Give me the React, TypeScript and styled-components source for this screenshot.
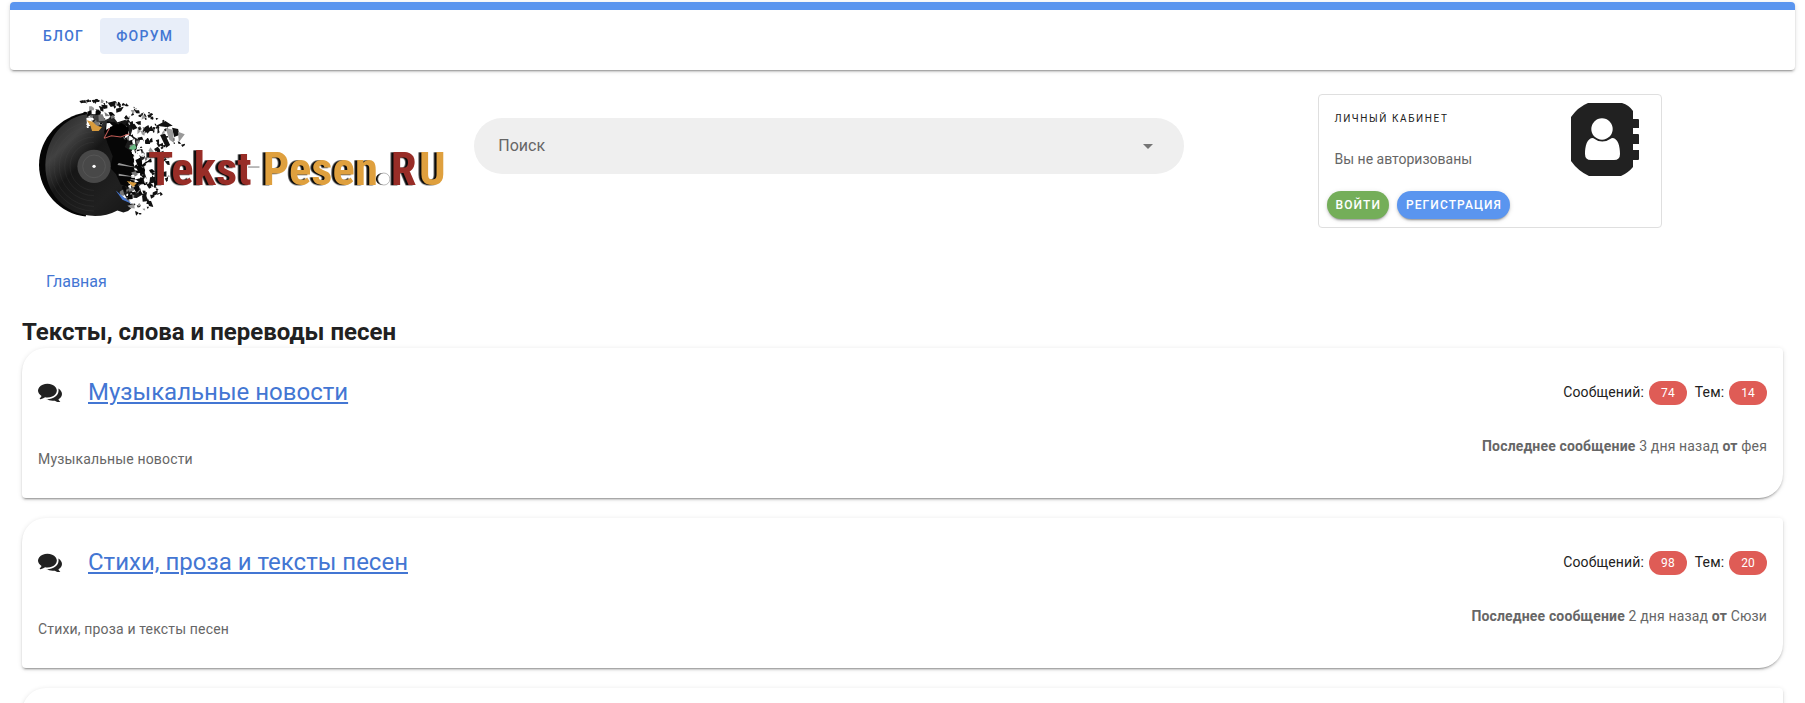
import React from "react";
import styled, { createGlobalStyle } from "styled-components";

const GlobalStyle = createGlobalStyle`
  html { scrollbar-width: none; }
  *, *::before, *::after { box-sizing: border-box; }
  body {
    margin: 0;
    background: #fff;
    color: #212121;
    font-family: Roboto, "Liberation Sans", sans-serif;
    font-size: 16px;
    line-height: 24px;
  }
`;

const raised = `0 3px 1px -2px rgba(0,0,0,.2), 0 2px 2px 0 rgba(0,0,0,.14), 0 1px 5px 0 rgba(0,0,0,.12)`;

const Page = styled.div`
  padding: 2px 10px 0;
`;

const TopBar = styled.header`
  height: 68px;
  padding: 8px 17px 0;
  border-top: 8px solid #5a95ef;
  border-radius: 4px;
  background: #fff;
  box-shadow: ${raised};
`;

const Nav = styled.nav`
  display: flex;
`;

const NavLink = styled.a<{ $active?: boolean }>`
  height: 36px;
  padding: 0 16px;
  border-radius: 4px;
  background: ${(p) => (p.$active ? "#e8eef9" : "transparent")};
  color: #4376d3;
  font-size: 14px;
  font-weight: 500;
  line-height: 36px;
  letter-spacing: 0.09em;
  text-transform: uppercase;
  text-decoration: none;
`;

const Container = styled.main`
  padding: 12px;
`;

const Intro = styled.div`
  display: grid;
  grid-template-columns: 3fr 5fr 4fr;
`;

const Column = styled.div`
  min-width: 0;
  padding: 12px;
`;

const LogoLink = styled.a`
  display: block;
  svg { display: block; width: 100%; height: auto; }
`;

const LogoText = styled.g`
  font-family: "Liberation Sans Narrow", "Roboto Condensed", "Liberation Serif", serif;
  font-size: 140px;
  font-weight: 700;
  filter: drop-shadow(-8px 1px 0 #0a0a0a);
`;

const SearchBox = styled.label`
  display: flex;
  align-items: center;
  height: 56px;
  margin-top: 24px;
  padding: 0 24px;
  border-radius: 28px;
  background: #efefef;
  color: #757575;
`;

const SearchInput = styled.input`
  flex: 1;
  min-width: 0;
  padding: 0;
  border: 0;
  outline: 0;
  background: transparent;
  color: #212121;
  font: inherit;
  &::placeholder { color: #666; opacity: 1; }
`;

const Account = styled.section`
  display: flex;
  flex-direction: column;
  justify-content: space-between;
  max-width: 344px;
  height: 134px;
  margin: 0 auto;
  padding: 8px;
  border: 1px solid #dfdfdf;
  border-radius: 4px;
`;

const AccountInfo = styled.div`
  display: flex;
  justify-content: space-between;
  padding: 0 14px 0 8px;
`;

const Overline = styled.h2`
  margin: 0 0 14px;
  font-size: 10px;
  font-weight: 400;
  line-height: 32px;
  letter-spacing: 0.16em;
  text-transform: uppercase;
`;

const Muted = styled.p`
  margin: 0;
  color: #666;
  font-size: 14px;
  line-height: 20px;
`;

const Actions = styled.div`
  display: flex;
  gap: 8px;
`;

const Pill = styled.button<{ $color: string }>`
  height: 28px;
  padding: 0 8px 0 9px;
  border: 0;
  border-radius: 14px;
  background: ${(p) => p.$color};
  box-shadow: ${raised};
  color: #fff;
  font-family: inherit;
  font-size: 12px;
  font-weight: 500;
  letter-spacing: 0.09em;
  text-transform: uppercase;
`;

const Breadcrumbs = styled.nav`
  padding: 30px 24px 14px;
  a { color: #4376d3; text-decoration: none; }
`;

const SectionTitle = styled.h1`
  margin: 8px 0 0;
  font-size: 24px;
  font-weight: 700;
  line-height: 32px;
`;

const ForumList = styled.div`
  display: grid;
  gap: 20px;
`;

const ForumCard = styled.article`
  display: flex;
  flex-direction: column;
  gap: 28px;
  min-height: 150px;
  padding: 28px 16px 16px;
  border-radius: 24px 4px;
  background: #fff;
  box-shadow: ${raised};
`;

const CardRow = styled.div`
  display: flex;
  align-items: center;
  justify-content: space-between;
`;

const CardFooter = styled(CardRow)`
  align-items: flex-start;
  letter-spacing: 0.01em;
`;

const Heading = styled.div`
  display: flex;
  align-items: center;
  gap: 26px;
`;

const ForumLink = styled.a`
  color: #4376d3;
  font-size: 24px;
  line-height: 32px;
`;

const Stats = styled.div`
  display: flex;
  align-items: baseline;
  font-size: 14px;
  letter-spacing: 0.01em;
`;

const Badge = styled.span`
  margin: 0 8px 0 5px;
  padding: 0 12px;
  border-radius: 12px;
  background: #df5c56;
  color: #fff;
  font-size: 12px;
  line-height: 24px;
  &:last-child { margin-right: 0; }
`;

const Description = styled(Muted)`
  padding-top: 13px;
`;

/* Pieces flying off the right side of the record. */
function makeShards() {
  let seed = 11;
  const rnd = () => {
    seed = (seed * 16807) % 2147483647;
    return seed / 2147483647;
  };
  const shards: { d: string; fill: string }[] = [];
  for (let i = 0; i < 330; i++) {
    const angle = -1.75 + rnd() * 2.65;
    const spread = Math.pow(rnd(), 1.5);
    const r = 112 + spread * (angle < -0.3 ? 150 : 100);
    const x = 225 + Math.cos(angle) * r * 1.08;
    const y = 238 + Math.sin(angle) * Math.min(r, 190);
    const s = (r < 200 ? 8 : 5) * (0.5 + rnd());
    const p = [0, 1, 2, 3].map((k) => {
      const a = k * 1.57 + rnd();
      const q = s * (0.4 + rnd());
      return `${Math.round(x + Math.cos(a) * q)} ${Math.round(y + Math.sin(a) * q)}`;
    });
    const c = rnd();
    shards.push({
      d: `M${p.join("L")}Z`,
      fill: r < 158 ? (c < 0.42 ? "#fff" : c < 0.6 ? "#777" : "#080808") : c < 0.2 ? "#999" : "#111",
    });
  }
  return shards;
}
const shards = makeShards();

const words = [
  { x: 384, text: "Tekst", fill: "#982d27" },
  { x: 728, text: "Pesen", fill: "#dfa03e" },
  { x: 1112, text: "R", fill: "#982d27" },
  { x: 1196, text: "U", fill: "#dfa03e" },
];

const Logo = () => (
  <svg viewBox="42 27 1248 384" role="img" aria-label="Tekst-Pesen.RU">
    <defs>
      <linearGradient id="vinyl" x1="0" y1="0" x2="1" y2="1">
        <stop offset="0" stopColor="#1d1d1d" />
        <stop offset=".25" stopColor="#414141" />
        <stop offset=".42" stopColor="#161616" />
        <stop offset=".7" stopColor="#202020" />
        <stop offset="1" stopColor="#111" />
      </linearGradient>
    </defs>
    <path d="M200 82C120 94 57 160 57 240s65 148 140 154l35-150Z" fill="#050505" />
    <path d="M205 87l35 0 10 13 30 -4 12 16 32 -10 16 22 -8 26 24 14 -6 30 25 20 -8 30 14 40 -22 18 6 28 -24 14 5 14 -22 20 -14 4 -18 -6Q260 393 225 393C130 390 75 320 76 240 78 160 130 95 205 87Z" fill="url(#vinyl)" />
    <path d="M262 108l50 14 16 34 -14 30 40 26 22 40 -10 42 -30 14 -34 -10 -14 -30 -18 -20 8 -34 -16 -40 -10 -34Z" fill="#060606" />
    {[72, 88, 104, 120, 134].map((r) => (
      <path key={r} d={`M${222 - r} 244a${r} ${r} 0 0 1 ${r} -${r}M${222 - r} 244a${r} ${r} 0 0 0 ${r} ${r}`} fill="none" stroke="#4b4b4b" strokeOpacity=".35" strokeWidth="2" />
    ))}
    <circle cx="222" cy="244" r="50" fill="#484848" />
    <circle cx="222" cy="244" r="34" fill="none" stroke="#5c5c5c" strokeWidth="2" />
    <circle cx="222" cy="244" r="5" fill="#fff" />
    {shards.map((s, i) => (
      <path key={i} d={s.d} fill={s.fill} />
    ))}
    <path d="M408 122l28-14 22 14-20 4ZM456 128l18 4 4 18-16 6ZM420 150l14-4 16 34-12 8Z" fill="#111" />
    <path d="M436 128l22 6 4 40-14-10ZM474 140l20 8-18 24Z" fill="#999" />
    <path d="M270 126l34-12 22 14-2 20-54 6Z" fill="#000" />
    <path d="M200 106l18 4 12 12 16 4-10 12-20 0-4-14Z" fill="#d79a3d" />
    <path d="M252 160l16-30M252 160l22-8 28 4 26-10" fill="none" stroke="#c15b55" strokeWidth="3" />
    <path d="M326 190l18-14 6 14-12 6Z" fill="#69b982" />
    <path d="M320 288l30 6-10 12Z" fill="#d79a3d" />
    <path d="M287 316l48 40-28-12Z" fill="#4676cf" />
    <path d="M292 240l60 8-56-14ZM296 266l50 10-50-4Z" fill="#999" />
    <LogoText>
      {words.map((w) => (
        <text key={w.x} x={w.x} y="299" fill={w.fill}>{w.text}</text>
      ))}
    </LogoText>
    <path d="M684 246h34" stroke="#999" strokeWidth="4" />
    <circle cx="1084" cy="282" r="17" fill="#0a0a0a" />
    <circle cx="1091" cy="282" r="18" fill="#fff" stroke="#999" strokeWidth="2" />
  </svg>
);

const AddressBook = () => (
  <svg width="68" height="73" viewBox="0 0 68 73" aria-hidden="true">
    <path fill="#212121" d="M17 0H51Q58 2 62 8V16H67Q68 16 68 17V25H62V31H67Q68 31 68 32V41H62V47H68V56Q68 57 67 57H62V64Q57 70 50 73H18Q7 68 0 58V14Q7 4 17 0Z" />
    <circle cx="31" cy="26" r="10.700" fill="#fff" />
    <path fill="#fff" d="M22 35Q31 42 41 35C47 35 49 43 49 51Q49 57 43 57H20Q14 57 14 51C14 43 16 35 22 35Z" />
  </svg>
);

const Comments = () => (
  <svg width="24" height="20" viewBox="0 128 1792 1493" fill="#212121" aria-hidden="true">
    <path d="M1408 768q0 139-94 257t-256.500 186.500-353.500 68.500q-86 0-176-16-124 88-278 128-36 9-86 16h-3q-11 0-20.500-8t-11.500-21q-1-3-1-6.500t.5-6.500 2-6l2.500-5 3.500-5.500 4-5 4.500-5 4-4.500q5-6 23-25t26-29.500 22.500-29 25-38.500 20.500-44q-124-72-195-177t-71-224q0-139 94-257t256.500-186.500 353.500-68.500 353.500 68.500 256.500 186.500 94 257zm384 256q0 120-71 224.500t-195 176.500q10 24 20.500 44t25 38.500 22.500 29 26 29.500 23 25q1 1 4 4.500t4.500 5 4 5 3.500 5.500l2.500 5 2 6 .5 6.500-1 6.500q-3 14-13 22t-22 7q-50-7-86-16-154-40-278-128-90 16-176 16-271 0-472-132 58 4 88 4 161 0 309-45t264-129q125-92 192-212t67-254q0-77-23-152 129 71 204 178t75 230z" />
  </svg>
);

const forums = [
  { title: "Музыкальные новости", messages: 74, topics: 14, when: "3 дня назад", author: "фея" },
  { title: "Стихи, проза и тексты песен", messages: 98, topics: 20, when: "2 дня назад", author: "Сюзи" },
];

export default function App() {
  return (
    <>
      <GlobalStyle />
      <Page>
        <TopBar>
          <Nav>
            <NavLink href="#blog">Блог</NavLink>
            <NavLink href="#forum" $active>Форум</NavLink>
          </Nav>
        </TopBar>
        <Container>
          <Intro>
            <Column>
              <LogoLink href="#home"><Logo /></LogoLink>
            </Column>
            <Column>
              <SearchBox>
                <SearchInput type="text" placeholder="Поиск" aria-label="Поиск" />
                <svg width="24" height="24" viewBox="0 0 24 24" fill="currentColor" aria-hidden="true">
                  <path d="M7 10l5 5 5-5z" />
                </svg>
              </SearchBox>
            </Column>
            <Column>
              <Account>
                <AccountInfo>
                  <div>
                    <Overline>Личный кабинет</Overline>
                    <Muted>Вы не авторизованы</Muted>
                  </div>
                  <AddressBook />
                </AccountInfo>
                <Actions>
                  <Pill type="button" $color="#74ae59">Войти</Pill>
                  <Pill type="button" $color="#5a95ef">Регистрация</Pill>
                </Actions>
              </Account>
            </Column>
          </Intro>
          <Breadcrumbs aria-label="Навигация">
            <a href="#home">Главная</a>
          </Breadcrumbs>
          <SectionTitle>Тексты, слова и переводы песен</SectionTitle>
          <ForumList>
            {forums.map((f) => (
              <ForumCard key={f.title}>
                <CardRow>
                  <Heading>
                    <Comments />
                    <ForumLink href="#topic">{f.title}</ForumLink>
                  </Heading>
                  <Stats>
                    Сообщений: <Badge>{f.messages}</Badge>
                    Тем: <Badge>{f.topics}</Badge>
                  </Stats>
                </CardRow>
                <CardFooter>
                  <Description>{f.title}</Description>
                  <Muted>
                    <b>Последнее сообщение</b> {f.when} <b>от</b> {f.author}
                  </Muted>
                </CardFooter>
              </ForumCard>
            ))}
            <ForumCard />
          </ForumList>
        </Container>
      </Page>
    </>
  );
}
